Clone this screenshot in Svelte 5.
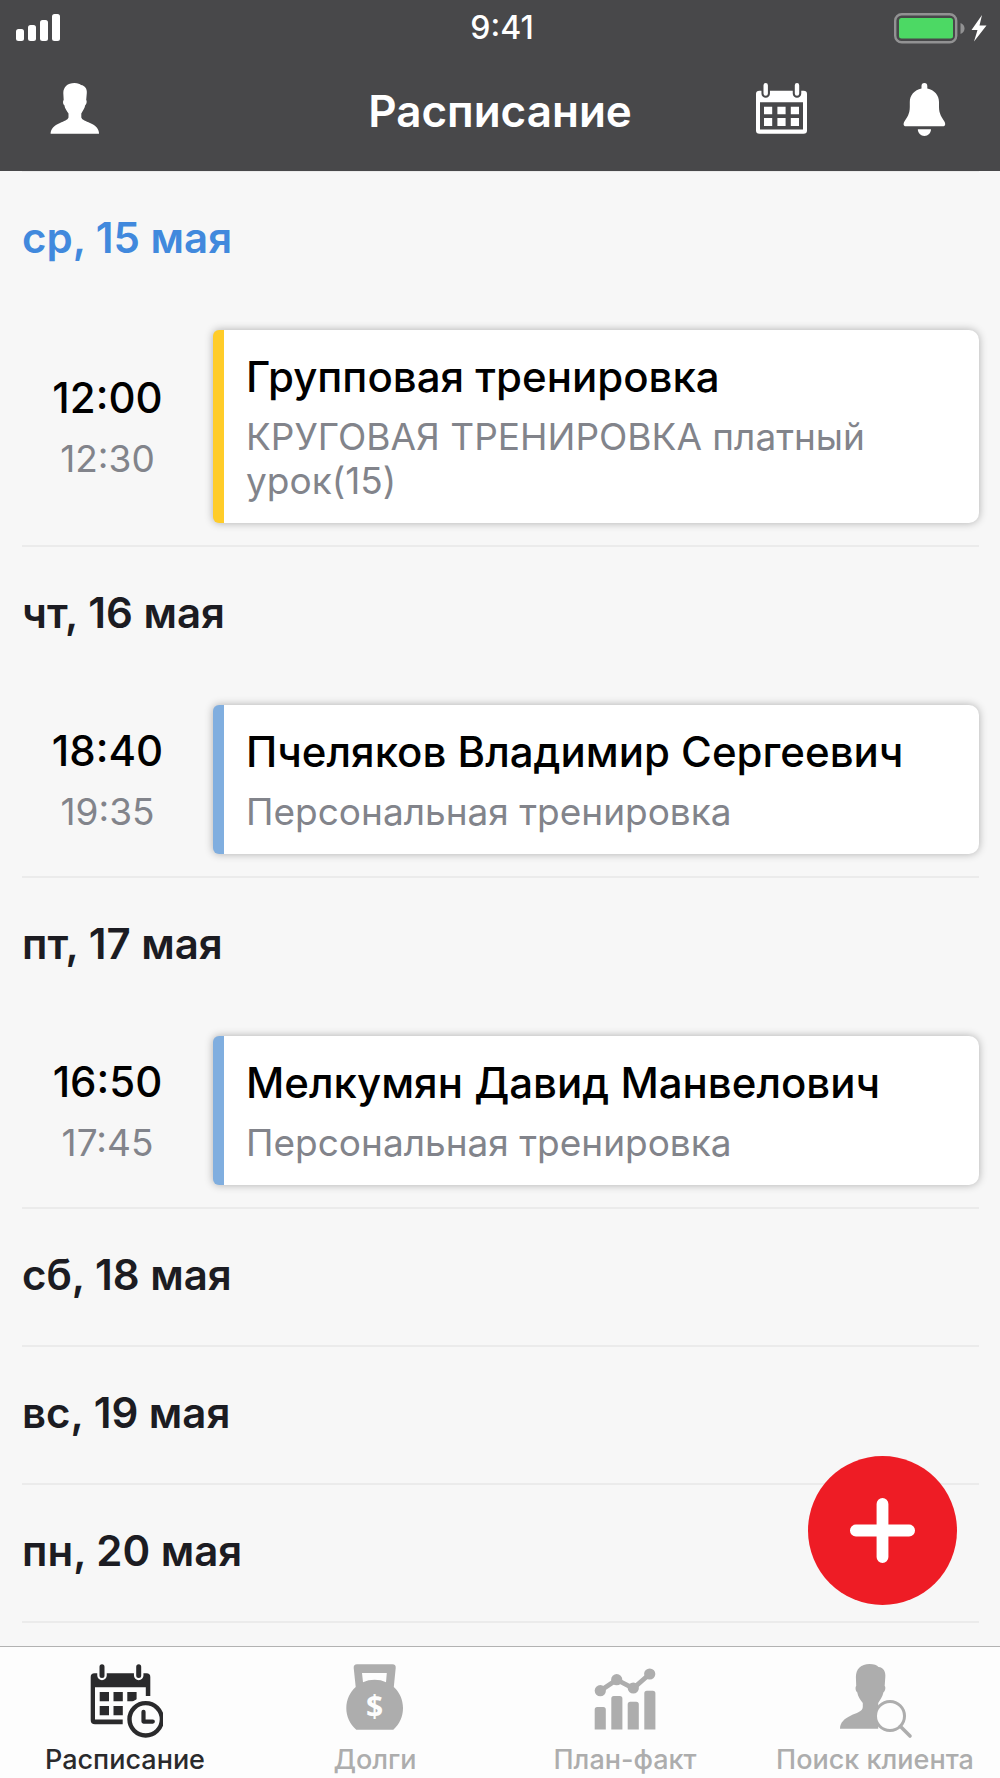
<script>
	/** @type {{ label: string, today?: boolean, events: { from: string, to: string, title: string, note: string, type: 'group' | 'personal' }[] }[]} */
	const days = [
		{
			label: 'ср, 15 мая',
			today: true,
			events: [
				{
					from: '12:00',
					to: '12:30',
					title: 'Групповая тренировка',
					note: 'КРУГОВАЯ ТРЕНИРОВКА платный урок(15)',
					type: 'group'
				}
			]
		},
		{
			label: 'чт, 16 мая',
			events: [
				{
					from: '18:40',
					to: '19:35',
					title: 'Пчеляков Владимир Сергеевич',
					note: 'Персональная тренировка',
					type: 'personal'
				}
			]
		},
		{
			label: 'пт, 17 мая',
			events: [
				{
					from: '16:50',
					to: '17:45',
					title: 'Мелкумян Давид Манвелович',
					note: 'Персональная тренировка',
					type: 'personal'
				}
			]
		},
		{ label: 'сб, 18 мая', events: [] },
		{ label: 'вс, 19 мая', events: [] },
		{ label: 'пн, 20 мая', events: [] }
	];

	const tabs = [
		{ id: 'schedule', label: 'Расписание' },
		{ id: 'debts', label: 'Долги' },
		{ id: 'plan', label: 'План-факт' },
		{ id: 'search', label: 'Поиск клиента' }
	];

	let active = $state('schedule');
</script>

<div class="screen">
	<header>
		<div class="status">
			<svg class="signal" width="44" height="28" viewBox="0 0 44 28">
				<rect x="0" y="15" width="8" height="12" rx="2.5" />
				<rect x="12" y="11" width="8" height="16" rx="2.5" />
				<rect x="24" y="6" width="8" height="21" rx="2.5" />
				<rect x="36" y="0" width="8" height="27" rx="2.5" />
			</svg>
			<span>9:41</span>
			<svg class="battery" width="94" height="32" viewBox="0 0 94 32">
				<rect x="1.2" y="2.2" width="61" height="28" rx="6.5" fill="none" stroke="#929293" stroke-width="2.4" />
				<rect x="5" y="6" width="54" height="20.5" rx="2.5" fill="#4cd964" />
				<path d="M66.5 11C69.3 12 70.5 14 70.5 16.5S69.3 21 66.5 22Z" fill="#929293" />
				<path d="M88 3L77.5 18H83.5L80 29.500L92.500 13.500H85.500Z" fill="#fff" />
			</svg>
		</div>
		<div class="navbar">
			<div class="side">
				<button aria-label="Профиль">
					<svg width="60" height="60" viewBox="0 0 60 60">
						<path d="M29.5 2C33 2 35 3 36 4C40 4.500 42.200 8 41.800 12L41.200 19C42.200 20 41.500 23.500 40.300 24C39.500 28 37.500 30 36.300 32.500V36.500C37 39 41 40 45 42C51 44.500 54 48 54 52.800H5.600C5.600 48 9 44.500 15 42C19 40 22.800 39 23.500 36.500V32.500C22 30 20 28 19.300 24C18 23.500 17.600 20 18.700 19L18.300 12C18.300 6 22.500 2 29.500 2Z" />
					</svg>
				</button>
			</div>
			<h1>Расписание</h1>
			<div class="side right">
				<button aria-label="Календарь">
					<svg width="60" height="60" viewBox="0 0 60 60">
						<path fill-rule="evenodd" d="M7.500 9.700H51.500Q55 9.700 55 13V49.500Q55 52.800 51.500 52.800H7.500Q4 52.800 4 49.500V13Q4 9.700 7.500 9.700ZM8 21.300V48.500H51V21.300Z" />
						<path d="M13.700 6V12.500M45 6V12.500" stroke="#48484a" stroke-width="8.500" stroke-linecap="round" />
						<path d="M13.700 4.200V12.500M45 4.200V12.500" stroke="#fff" stroke-width="4.400" stroke-linecap="round" />
						<path d="M12 25.700h8.200v7.600H12zM25.400 25.700h8.200v7.600h-8.200zM38.800 25.700H47v7.600h-8.200zM12 37h8.200v8H12zM25.400 37h8.200v8h-8.200zM38.800 37H47v8h-8.200z" />
					</svg>
				</button>
				<button aria-label="Уведомления">
					<svg width="60" height="60" viewBox="0 0 60 60">
						<path d="M29.400 2Q32.300 2 32.300 5V7.600C39.500 9.200 44 14.500 44 21V26C44 33 47 36.500 49.400 40.500C51 43.500 50 45.300 48 45.300H10.800C8.800 45.300 7.800 43.500 9.400 40.500C12 36.500 14.800 33 14.800 26V21C14.800 14.500 19.300 9.200 26.500 7.600V5Q26.500 2 29.400 2Z" />
						<path d="M22.800 48.300H36C36 52 33 55 29.400 55S22.800 52 22.800 48.300Z" />
					</svg>
				</button>
			</div>
		</div>
	</header>

	<main>
		<div class="days">
			{#each days as day}
				<section>
					<h2 class:today={day.today}>{day.label}</h2>
					{#each day.events as event}
						<div class="event">
							<div class="time">
								<time>{event.from}</time>
								<time class="end">{event.to}</time>
							</div>
							<article class={event.type}>
								<h3>{event.title}</h3>
								<p>{event.note}</p>
							</article>
						</div>
					{/each}
				</section>
			{/each}
		</div>
		<button class="add" aria-label="Добавить">
			<svg width="67" height="67" viewBox="0 0 68 68">
				<path d="M34 7V61M7 34H61" stroke="#fff" stroke-width="12" stroke-linecap="round" />
			</svg>
		</button>
	</main>

	<nav>
		{#each tabs as tab}
			<button class="tab" class:active={active === tab.id} onclick={() => (active = tab.id)}>
				<svg width="76" height="76" viewBox="0 0 76 76">
					{#if tab.id === 'schedule'}
						<path d="M7.500 10.300H59.500Q63.300 10.300 63.300 14V33H58.800V24.300H8V56.400H35.700V61.300H8Q3.700 61.300 3.700 57V14Q3.700 10.300 7.500 10.300Z" />
						<path d="M15 5V12.500M51.700 5V12.500" stroke="#fdfdfd" stroke-width="9.500" stroke-linecap="round" />
						<path d="M15 3.800V12.500M51.700 3.800V12.500" stroke="currentColor" stroke-width="5" stroke-linecap="round" />
						<path d="M12.700 29h9.300v9.200h-9.300zM26.500 29h9.300v9.200h-9.300zM40.300 29h9.300v9.200h-9.300zM12.700 43h9.300v9.200h-9.300zM26.500 43h9.300v9.200h-9.300z" />
						<circle cx="58.700" cy="56.300" r="22" fill="#fdfdfd" />
						<circle cx="58.700" cy="56.300" r="16.200" fill="none" stroke="currentColor" stroke-width="4.400" />
						<path d="M56.500 48.800V58.600H65.800" fill="none" stroke="currentColor" stroke-width="4.200" stroke-linecap="round" stroke-linejoin="round" />
					{:else if tab.id === 'debts'}
						<path fill-rule="evenodd" d="M20 1.300H55.500Q59 1.300 58.700 5L56.800 23.900C62.500 29 66 36.500 66 45C66 53.500 62.500 61.500 56.300 66.700H19.300C13 61.500 9.300 53.500 9.300 45C9.300 36.500 13 29 18.700 23.900L16.700 5Q16.500 1.300 20 1.300ZM25 10L26 19.300C33 16 42.500 16 49 19.300L49.800 10Z" />
						<text x="37.700" y="54" text-anchor="middle">$</text>
					{:else if tab.id === 'plan'}
						<path d="M7.700 66.400V46.500Q7.700 44 10.200 44H16.300Q18.800 44 18.800 46.500V66.400ZM24.300 66.400V35.500Q24.300 33 26.800 33H32.900Q35.400 33 35.400 35.500V66.400ZM40.700 66.400V41.200Q40.700 38.700 43.200 38.700H49.300Q51.800 38.700 51.800 41.200V66.400ZM57.300 66.400V30.200Q57.300 27.700 59.800 27.700H65.900Q68.400 27.700 68.400 30.200V66.400Z" />
						<path d="M13.300 27.700L29.700 16.700L46.300 25.300L62.700 11" fill="none" stroke="currentColor" stroke-width="4.800" />
						<circle cx="13.300" cy="27.700" r="5.600" />
						<circle cx="29.700" cy="16.700" r="5.600" />
						<circle cx="46.300" cy="25" r="5.600" />
						<circle cx="62.700" cy="11" r="5.600" />
					{:else}
						<path d="M32.500 1C37 1 40 2.200 41.500 4C46.500 4.500 48.900 9 48.300 14L47.700 23C49 24 48.200 28.500 46.500 29.200C45.500 34 43 37 41.200 40V65.700H3C3 59.500 7.500 55.500 14 52.500C19 50 25.800 48.500 25.800 44V40C23.500 37 21 34 20.200 29.200C18.600 28.500 18 24 19.200 23L18.900 14C18.900 6 24 1 32.500 1Z" />
						<circle cx="53" cy="53" r="14.500" fill="#fdfdfd" stroke="currentColor" stroke-width="3" />
						<path d="M63.500 63.500L73 73" stroke="currentColor" stroke-width="3.600" stroke-linecap="round" />
					{/if}
				</svg>
				<span>{tab.label}</span>
			</button>
		{/each}
	</nav>
</div>

<style>
	:global(body) {
		margin: 0;
		background: #f7f7f7;
	}
	.screen {
		display: flex;
		flex-direction: column;
		min-height: 100vh;
		font-family: Inter, 'Liberation Sans', sans-serif;
		color: #000;
	}
	button {
		padding: 0;
		border: 0;
		background: none;
		font: inherit;
		color: inherit;
		cursor: pointer;
	}
	svg {
		display: block;
		fill: currentColor;
	}
	h1,
	h2,
	h3,
	p {
		margin: 0;
	}

	header {
		background: #48484a;
		color: #fff;
	}
	.status {
		display: grid;
		grid-template-columns: 1fr auto 1fr;
		align-items: center;
		height: 55px;
		padding: 0 12px 0 16px;
		font-size: 32px;
		font-weight: 500;
		line-height: 38px;
	}
	.battery {
		justify-self: end;
	}
	.navbar {
		display: grid;
		grid-template-columns: 1fr auto 1fr;
		align-items: center;
		height: 112px;
		padding: 0 45px 4px;
	}
	.side {
		display: flex;
		gap: 83px;
	}
	.right {
		justify-content: flex-end;
	}
	h1 {
		font-size: 44px;
		font-weight: 600;
		line-height: 52px;
	}

	main {
		position: relative;
		flex: 1;
	}
	.days {
		margin: 0 21px 23px 22px;
		border-top: 1px solid #ebebeb;
	}
	section {
		border-bottom: 2px solid #ebebeb;
	}
	h2 {
		padding: 41px 0 45px;
		font-size: 42px;
		font-weight: 600;
		line-height: 50px;
		color: #1c1c22;
	}
	.today {
		color: #4189dd;
	}
	.event {
		display: flex;
		align-items: center;
		padding: 22px 0;
	}
	.time {
		display: flex;
		flex-direction: column;
		align-items: center;
		gap: 14px;
		width: 171px;
		margin-right: 20px;
		font-size: 42px;
		font-weight: 500;
		line-height: 50px;
	}
	.end {
		font-size: 37px;
		font-weight: 400;
		line-height: 44px;
		color: #82848b;
	}
	article {
		flex: 1;
		display: flex;
		flex-direction: column;
		gap: 13px;
		padding: 22px 22px 20px;
		border-left: 11px solid #80aedf;
		border-radius: 6px 10px 10px 6px;
		background: #fff;
		box-shadow: 0 0 8px rgba(0, 0, 0, 0.3);
		&.group {
			border-left-color: #ffcc29;
		}
	}
	h3 {
		font-size: 42px;
		font-weight: 500;
		line-height: 50px;
	}
	p {
		font-size: 37px;
		line-height: 44px;
		color: #82848b;
	}
	.add {
		position: absolute;
		right: 43px;
		bottom: 41px;
		display: grid;
		place-items: center;
		width: 149px;
		height: 149px;
		border-radius: 50%;
		background: #ee1c25;
	}

	nav {
		display: grid;
		grid-template-columns: repeat(4, 1fr);
		border-top: 1px solid #b2b2b2;
		background: #fdfdfd;
	}
	.tab {
		display: flex;
		flex-direction: column;
		align-items: center;
		gap: 5px;
		padding: 16px 0 2px;
		font-size: 27px;
		font-weight: 500;
		line-height: 32px;
		color: #adadad;
		&.active {
			color: #2a2a2c;
		}
	}
	text {
		font-family: 'Noto Sans', sans-serif;
		font-size: 30px;
		font-weight: 700;
		fill: #fdfdfd;
	}
</style>
